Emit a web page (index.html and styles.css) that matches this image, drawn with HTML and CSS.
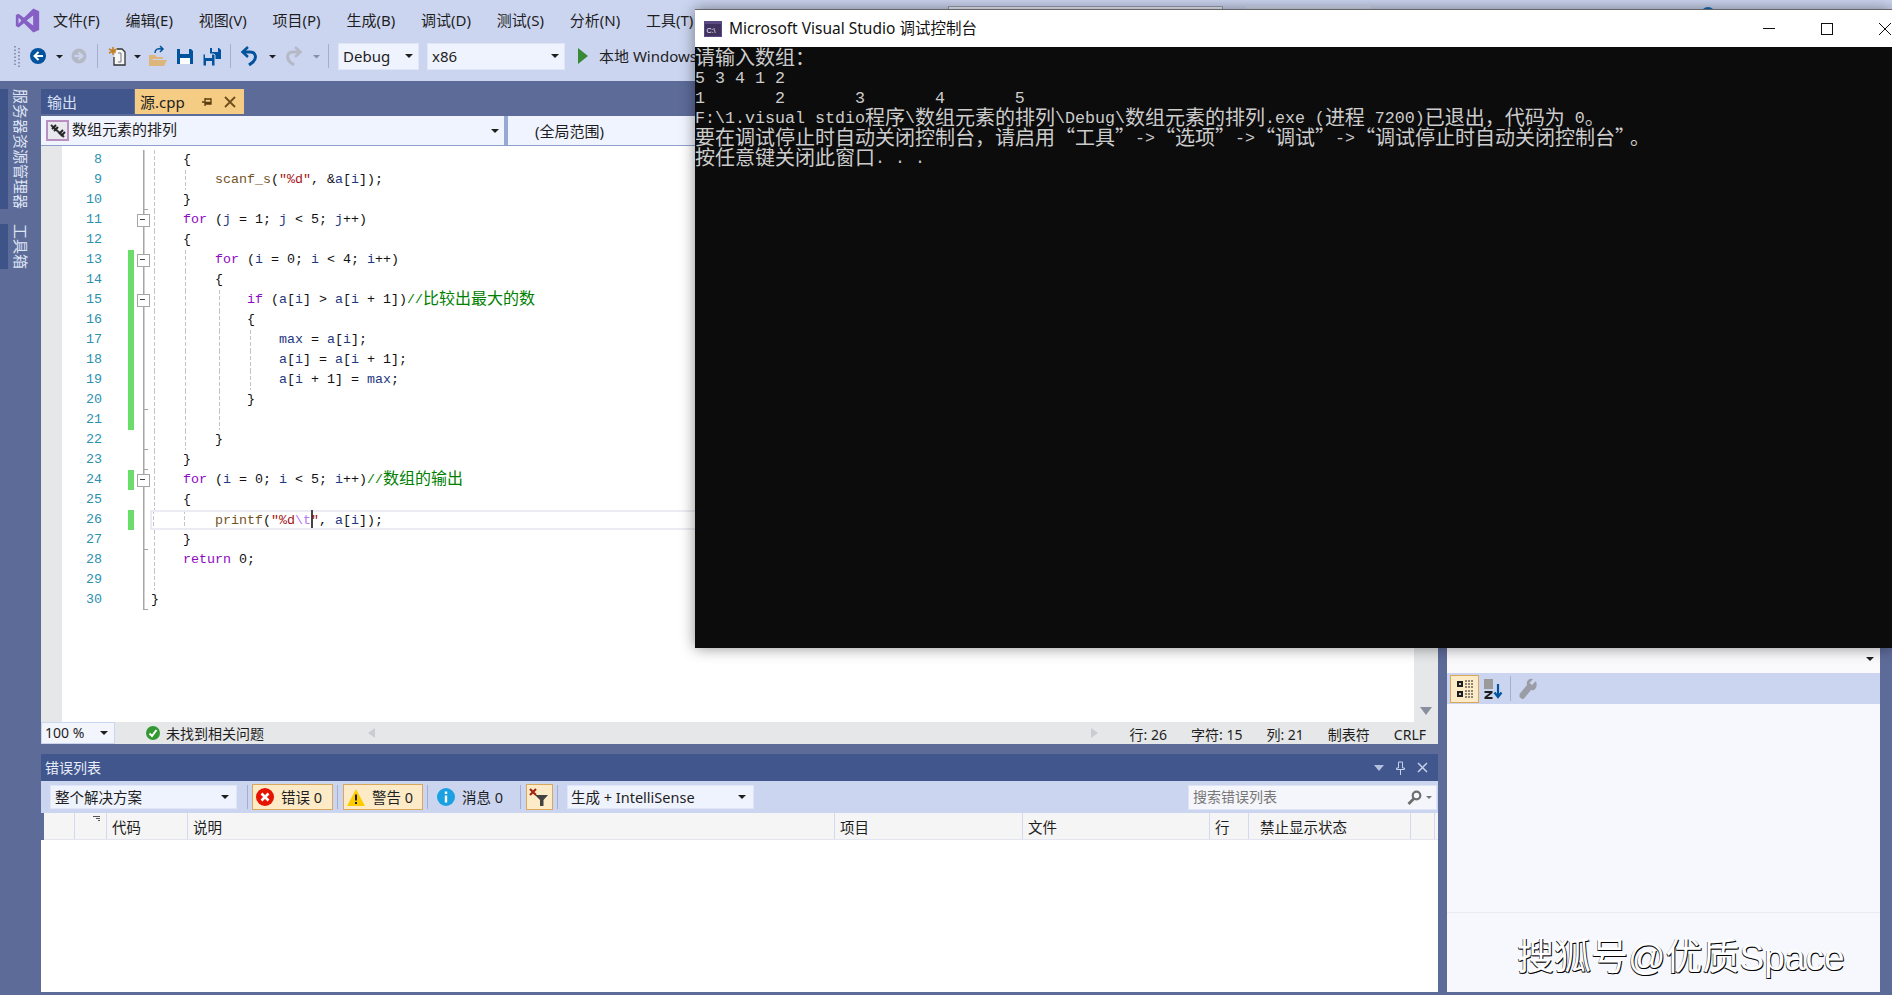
FILE: index.html
```html
<!DOCTYPE html>
<html lang="zh-CN">
<head>
<meta charset="utf-8">
<title>Visual Studio</title>
<link rel="stylesheet" href="styles.css">
</head>
<body>
<div class="app">
  <header class="menubar">
    <svg class="logo" viewBox="0 0 24 24"><path fill="#865fc5" fill-rule="evenodd" d="M17.6 0.5 8.6 9.4 3.4 5.4 0.8 6.7V17.3L3.4 18.6 8.6 14.6 17.6 23.5 23.2 21V3ZM17.4 7.2V16.8L11.2 12ZM3.4 9 6.1 12 3.4 15Z"/></svg>
    <nav class="menu">
      <span>文件(F)</span><span>编辑(E)</span><span>视图(V)</span><span>项目(P)</span><span>生成(B)</span><span>调试(D)</span><span>测试(S)</span><span>分析(N)</span><span>工具(T)</span>
    </nav>
    <div class="title-extras">
      <span class="tx-search"></span><span class="tx-box"></span><span class="tx-dot"></span>
    </div>
  </header>

  <div class="toolbar">
    <svg class="strip" width="338" height="41" viewBox="0 0 338 41">
      <path d="M15 6V27M19 8V27" stroke="#8a94b4" stroke-width="2" stroke-dasharray="1.5 2" fill="none"/>
      <circle cx="38" cy="16" r="8" fill="#00539c"/>
      <path d="M43 16H35M38.5 12 34.500 16 38.500 20" stroke="#fff" stroke-width="2" fill="none"/>
      <path d="M56 15h7l-3.500 3.500z" fill="#1e1e1e"/>
      <circle cx="79" cy="16" r="7.500" fill="#b5b9c6"/>
      <path d="M74.500 16H82M78.500 12.500 82.500 16 78.500 19.500" stroke="#ccd5f0" stroke-width="2" fill="none"/>
      <path d="M97.500 4V28M230.500 4V28M328.500 4V28" stroke="#a4afd0" fill="none"/>
      <path d="M113 7V15M109 9 117 13M109 13 117 9" stroke="#c27d1a" stroke-width="1.500" fill="none"/>
      <path d="M117 9H122L125 12V25H114V17" stroke="#333" stroke-width="1.300" fill="#f6f6f6"/>
      <path d="M118 13H121V22H118" stroke="#777" fill="none"/>
      <path d="M134 15h7l-3.500 3.500z" fill="#1e1e1e"/>
      <path d="M149 15H155L157 17H163V19H153L150 26H149ZM152 20H167L164 26H150Z" fill="#dcb67a"/>
      <path d="M155 13C155 9 158 8 162 9M160 6 163 9 160 12" stroke="#00539c" stroke-width="1.500" fill="none"/>
      <path fill="#00539c" d="M177 9H191L193 11V24H177Z"/>
      <path fill="#ccd5f0" d="M180 9H189V14H180Z"/>
      <path fill="#fff" d="M180 18H190V24H180Z"/>
      <path fill="#00539c" d="M210 8H219L221 10V19H210Z"/>
      <path fill="#ccd5f0" d="M212 8H218V12H212Z"/>
      <path fill="#00539c" stroke="#ccd5f0" d="M203 14H214L215 15V26H203Z"/>
      <path fill="#ccd5f0" d="M205 14H212V18H205ZM206 21H212V26H206Z"/>
      <path d="M243 12H250C256 12 257 18 253 22L249 25" stroke="#00539c" stroke-width="3" fill="none"/>
      <path d="M248 7 242.500 12 248 17" stroke="#00539c" stroke-width="2.500" fill="none"/>
      <path d="M269 15h7l-3.500 3.500z" fill="#1e1e1e"/>
      <path d="M300 12H293C287 12 286 18 290 22L294 25" stroke="#b5b9c6" stroke-width="3" fill="none"/>
      <path d="M295 7 300.500 12 295 17" stroke="#b5b9c6" stroke-width="2.500" fill="none"/>
      <path d="M313 15h7l-3.500 3.500z" fill="#888ea3"/>
    </svg>
    <div class="combo debug"><span>Debug</span><i class="caret-down"></i></div>
    <div class="combo x86"><span>x86</span><i class="caret-down"></i></div>
    <svg class="play" width="10" height="16" viewBox="0 0 10 16"><path d="M0 0 10 8 0 16Z" fill="#388a34"/></svg>
    <span class="run-text">本地 Windows 调试器</span>
  </div>

  <div class="workspace">
    <aside class="sidebar">
      <div class="side-tab server"><span>服务器资源管理器</span></div>
      <div class="side-tab tools"><span>工具箱</span></div>
    </aside>

    <main class="center">
      <div class="tabs">
        <div class="tab other">输出</div>
        <div class="tab active">
          <span class="tab-name">源.cpp</span>
          <svg class="tab-pin" width="12" height="12" viewBox="0 0 12 12"><path d="M1 6H4M4 2V10M4 3H10V8H4M4 6.500H10" stroke="#5a3c10" stroke-width="1.300" fill="none"/></svg>
          <svg class="tab-close" width="12" height="12" viewBox="0 0 12 12"><path d="M1 1 11 11M11 1 1 11" stroke="#6e4e1c" stroke-width="1.800"/></svg>
        </div>
      </div>
      <div class="navbar">
        <div class="nav-left">
          <svg class="class-icon" width="23" height="21" viewBox="0 0 23 21"><rect x="1" y="1" width="21" height="19" fill="#e8e8ee" stroke="#b98fc0" stroke-width="2"/><path d="M5 5 18 17" stroke="#333" stroke-width="2"/><path d="M6 9 10 5M8 11 12 7M13 14 17 10M15 16 19 12" stroke="#222" stroke-width="2"/></svg>
          <span>数组元素的排列</span>
          <i class="caret-down"></i>
        </div>
        <div class="nav-right">(全局范围)</div>
      </div>

      <div class="editor">
        <div class="editor-margin"></div>
        <div class="lines">
          <div class="row"><span class="num">8</span><span class="mark"></span><span class="fold"></span><code class="code lv0">    {</code></div>
          <div class="row"><span class="num">9</span><span class="mark"></span><span class="fold"></span><code class="code lv1">        <b class="f">scanf_s</b>(<b class="s">"%d"</b>, &amp;<b class="v">a</b>[<b class="v">i</b>]);</code></div>
          <div class="row"><span class="num">10</span><span class="mark"></span><span class="fold end"></span><code class="code lv0">    }</code></div>
          <div class="row"><span class="num">11</span><span class="mark"></span><span class="fold box"></span><code class="code lv0">    <b class="k">for</b> (<b class="v">j</b> = 1; <b class="v">j</b> &lt; 5; <b class="v">j</b>++)</code></div>
          <div class="row"><span class="num">12</span><span class="mark"></span><span class="fold"></span><code class="code lv0">    {</code></div>
          <div class="row"><span class="num">13</span><span class="mark on"></span><span class="fold box"></span><code class="code lv1">        <b class="k">for</b> (<b class="v">i</b> = 0; <b class="v">i</b> &lt; 4; <b class="v">i</b>++)</code></div>
          <div class="row"><span class="num">14</span><span class="mark on"></span><span class="fold"></span><code class="code lv1">        {</code></div>
          <div class="row"><span class="num">15</span><span class="mark on"></span><span class="fold box"></span><code class="code lv2">            <b class="k">if</b> (<b class="v">a</b>[<b class="v">i</b>] &gt; <b class="v">a</b>[<b class="v">i</b> + 1])<b class="c">//<i class="z">比较出最大的数</i></b></code></div>
          <div class="row"><span class="num">16</span><span class="mark on"></span><span class="fold"></span><code class="code lv2">            {</code></div>
          <div class="row"><span class="num">17</span><span class="mark on"></span><span class="fold"></span><code class="code lv3">                <b class="v">max</b> = <b class="v">a</b>[<b class="v">i</b>];</code></div>
          <div class="row"><span class="num">18</span><span class="mark on"></span><span class="fold"></span><code class="code lv3">                <b class="v">a</b>[<b class="v">i</b>] = <b class="v">a</b>[<b class="v">i</b> + 1];</code></div>
          <div class="row"><span class="num">19</span><span class="mark on"></span><span class="fold"></span><code class="code lv3">                <b class="v">a</b>[<b class="v">i</b> + 1] = <b class="v">max</b>;</code></div>
          <div class="row"><span class="num">20</span><span class="mark on"></span><span class="fold end"></span><code class="code lv2">            }</code></div>
          <div class="row"><span class="num">21</span><span class="mark on"></span><span class="fold"></span><code class="code lv2"> </code></div>
          <div class="row"><span class="num">22</span><span class="mark"></span><span class="fold end"></span><code class="code lv1">        }</code></div>
          <div class="row"><span class="num">23</span><span class="mark"></span><span class="fold end"></span><code class="code lv0">    }</code></div>
          <div class="row"><span class="num">24</span><span class="mark on"></span><span class="fold box"></span><code class="code lv0">    <b class="k">for</b> (<b class="v">i</b> = 0; <b class="v">i</b> &lt; 5; <b class="v">i</b>++)<b class="c">//<i class="z">数组的输出</i></b></code></div>
          <div class="row"><span class="num">25</span><span class="mark"></span><span class="fold"></span><code class="code lv0">    {</code></div>
          <div class="row"><span class="num">26</span><span class="mark on"></span><span class="fold"></span><code class="code lv1 current">        <b class="f">printf</b>(<b class="s">"%d</b><b class="e">\t</b><span class="caret"></span><b class="s">"</b>, <b class="v">a</b>[<b class="v">i</b>]);</code></div>
          <div class="row"><span class="num">27</span><span class="mark"></span><span class="fold end"></span><code class="code lv0">    }</code></div>
          <div class="row"><span class="num">28</span><span class="mark"></span><span class="fold"></span><code class="code lv0">    <b class="k">return</b> 0;</code></div>
          <div class="row"><span class="num">29</span><span class="mark"></span><span class="fold"></span><code class="code lv0"> </code></div>
          <div class="row"><span class="num">30</span><span class="mark"></span><span class="fold end"></span><code class="code">}</code></div>
        </div>
        <div class="vscroll"><i class="arrow-down"></i></div>
      </div>

      <div class="statusbar">
        <div class="combo zoom"><span>100 %</span><i class="caret-down"></i></div>
        <svg class="check" width="14" height="14" viewBox="0 0 14 14"><circle cx="7" cy="7" r="7" fill="#339933"/><path d="M3.500 7.500 6 10 10.500 4" stroke="#fff" stroke-width="2" fill="none"/></svg>
        <span class="no-issue">未找到相关问题</span>
        <i class="arrow-left"></i>
        <i class="arrow-right"></i>
        <div class="st-right"><span>行: 26</span><span>字符: 15</span><span>列: 21</span><span>制表符</span><span>CRLF</span></div>
      </div>

      <section class="errors">
        <div class="err-title">
          <span>错误列表</span>
          <div class="err-actions">
            <svg width="10" height="6" viewBox="0 0 10 6"><path d="M0 0H10L5 6Z" fill="#b4bfdc"/></svg>
            <svg width="9" height="14" viewBox="0 0 9 14"><path d="M2.500 1H6.500V7H8.500V8.500H0.500V7H2.500ZM4.500 8.500V14" stroke="#c6d0e8" fill="none"/></svg>
            <svg width="11" height="11" viewBox="0 0 11 11"><path d="M1 1 10 10M10 1 1 10" stroke="#c6d0e8" stroke-width="1.500"/></svg>
          </div>
        </div>
        <div class="err-toolbar">
          <div class="combo scope"><span>整个解决方案</span><i class="caret-down"></i></div>
          <i class="sep"></i>
          <div class="toggle tg-err">
            <svg width="18" height="18" viewBox="0 0 18 18"><circle cx="9" cy="9" r="9" fill="#e51400"/><path d="M5.500 5.500 12.500 12.500M12.500 5.500 5.500 12.500" stroke="#fff" stroke-width="2.600"/></svg>
            <span>错误 0</span>
          </div>
          <i class="sep"></i>
          <div class="toggle tg-warn">
            <svg width="18" height="17" viewBox="0 0 18 17"><path d="M9 0 18 17H0Z" fill="#ffcc00"/><path d="M9 5.500V11.500M9 13V15" stroke="#1e1e1e" stroke-width="2"/></svg>
            <span>警告 0</span>
          </div>
          <i class="sep"></i>
          <div class="plain-msg">
            <svg width="18" height="18" viewBox="0 0 18 18"><circle cx="9" cy="9" r="9" fill="#1ba1e2"/><path d="M9 3.500V6M9 7.500V14.500" stroke="#fff" stroke-width="2.400"/></svg>
            <span>消息 0</span>
          </div>
          <i class="sep"></i>
          <div class="toggle tg-filter">
            <svg width="20" height="18" viewBox="0 0 20 18"><path d="M1 1 7 7M7 1 1 7" stroke="#a1260d" stroke-width="2.200"/><path d="M6 7H19L14.500 12V18H11V12Z" fill="#424242"/></svg>
          </div>
          <i class="sep"></i>
          <div class="combo kind"><span>生成 + IntelliSense</span><i class="caret-down"></i></div>
          <div class="err-search">
            <span>搜索错误列表</span>
            <svg width="15" height="15" viewBox="0 0 15 15"><circle cx="9.500" cy="5.500" r="3.800" stroke="#6d6d6d" stroke-width="2.200" fill="none"/><path d="M7 8.500 1.500 14" stroke="#6d6d6d" stroke-width="2.800"/></svg>
            <i class="caret-down grey"></i>
          </div>
        </div>
        <div class="err-head">
          <span></span><span class="sort-cell"><svg width="7" height="5" viewBox="0 0 7 5"><path d="M0 0H7V1H0ZM3 2H7V3H3ZM5 4H7V5H5Z" fill="#555"/></svg></span><span>代码</span><span>说明</span><span>项目</span><span>文件</span><span>行</span><span class="suppress">禁止显示状态</span><span></span>
        </div>
        <div class="err-body"></div>
      </section>
    </main>

    <aside class="props">
      <div class="props-head"><i class="caret-down"></i></div>
      <div class="props-bar">
        <div class="prop-btn on">
          <svg width="18" height="20" viewBox="0 0 18 20"><path d="M1 2H7V8H1ZM1 12H7V18H1Z" fill="#1e1e1e"/><path d="M3 5H5M4 4V6M3 15H5M4 14V16" stroke="#fff"/><path d="M9 2H17M9 5H17M9 8H17M9 12H17M9 15H17M9 18H17" stroke="#1e1e1e" stroke-dasharray="2 1"/></svg>
        </div>
        <svg class="az" width="20" height="22" viewBox="0 0 20 22"><rect x="1" y="1" width="9" height="10" fill="#9a9a9a"/><path d="M1.500 13H9.500V15L4.500 19H9.500V21H1.500V19L6.500 15H1.500Z" fill="#1e1e1e"/><path d="M15 6V18M11.500 14.500 15 19 18.500 14.500" stroke="#00539c" stroke-width="2.200" fill="none"/></svg>
        <i class="prop-sep"></i>
        <svg class="wrench" width="20" height="22" viewBox="0 0 20 22"><path d="M18 3 14 7 11.500 5 15 1C11 0 8 3 9 7L1.500 16V19L4 21H5.500L13 12C17 13 20 9 18 3Z" fill="#9a9da6"/></svg>
      </div>
      <div class="props-grid"></div>
      <div class="props-desc"><span class="watermark">搜狐号@优质Space</span></div>
    </aside>
  </div>
</div>

<section class="console">
  <div class="con-title">
    <svg width="18" height="16" viewBox="0 0 18 16"><rect width="18" height="16" fill="#5b4a82"/><rect x="1" y="3" width="16" height="12" fill="#3f3160"/><text x="2.500" y="12" class="con-ico-text">C:\</text></svg>
    <span>Microsoft Visual Studio 调试控制台</span>
    <div class="con-ctrl">
      <svg width="12" height="12" viewBox="0 0 12 12"><path d="M0 5.500H12" stroke="#111"/></svg>
      <svg width="12" height="12" viewBox="0 0 12 12"><rect x="0.500" y="0.500" width="11" height="11" fill="none" stroke="#111"/></svg>
      <svg width="12" height="12" viewBox="0 0 12 12"><path d="M0 0 12 12M12 0 0 12" stroke="#111"/></svg>
    </div>
  </div>
  <pre class="con-body"><i class="z">请输入数组：</i>
5 3 4 1 2
1       2       3       4       5
F:\1.visual stdio<i class="z">程序</i>\<i class="z">数组元素的排列</i>\Debug\<i class="z">数组元素的排列</i>.exe (<i class="z">进程</i> 7200)<i class="z">已退出，代码为</i> 0<i class="z">。</i>
<i class="z">要在调试停止时自动关闭控制台，请启用“工具”</i>-&gt;<i class="z">“选项”</i>-&gt;<i class="z">“调试”</i>-&gt;<i class="z">“调试停止时自动关闭控制台”</i><i class="z stop">。</i>
<i class="z">按任意键关闭此窗口</i>. . .</pre>
</section>
</body>
</html>
```
FILE: styles.css
```css
* { box-sizing: border-box; }
html, body { margin: 0; padding: 0; width: 1892px; height: 995px; overflow: hidden; }
body {
  position: relative;
  background: #5d6b99;
  color: #1e1e1e;
  font: 15px/20px "Noto Sans", "Noto Sans CJK SC", sans-serif;
}
i, b { font-style: normal; font-weight: normal; }
.app { display: flex; flex-direction: column; height: 995px; }

/* Top bars */
.menubar { height: 40px; flex: none; display: flex; align-items: center; background: #ccd5f0; padding-left: 15px; }
.logo { width: 25px; height: 25px; flex: none; }
.menu { display: flex; gap: 25.800px; margin-left: 13px; white-space: nowrap; }
.title-extras { margin-left: auto; align-self: flex-start; display: flex; padding: 6px 177px 0 0; }
.tx-search { width: 275px; height: 30px; background: #eef1fb; border: 1px solid #98a0b4; }
.tx-box { width: 125px; height: 30px; margin-left: 23px; background: #d5dcf2; }
.tx-dot { width: 14px; height: 14px; margin: 1px 0 0 330px; border-radius: 50%; background: #0e70c0; }

.toolbar { height: 41px; flex: none; display: flex; align-items: flex-start; background: #ccd5f0; white-space: nowrap; }
.strip { display: block; flex: none; }
.combo { display: flex; align-items: center; justify-content: space-between; background: #eff3fd; border: 1px solid #e0e6f8; }
.caret-down { display: block; width: 0; height: 0; flex: none; border: 4px solid transparent; border-top: 4px solid #1e1e1e; border-bottom: 0; }
.caret-down.grey { border-top-color: #777; }
.debug { width: 81px; height: 27px; margin-top: 3px; padding: 0 5px 1px 4px; }
.x86 { width: 138px; height: 27px; margin: 3px 0 0 8px; padding: 0 5px 1px 4px; }
.play { margin: 8px 0 0 13px; flex: none; }
.run-text { margin: 6px 0 0 11px; }

.workspace { flex: 1; display: flex; min-height: 0; }

/* Left rail */
.sidebar { width: 41px; flex: none; padding-top: 8px; display: flex; flex-direction: column; gap: 15px; }
.side-tab { background: linear-gradient(90deg, #3e5489 8px, transparent 8px); }
.side-tab span { display: block; padding-left: 13px; writing-mode: vertical-rl; text-orientation: sideways; color: #dce3f4; line-height: 16px; }
.side-tab.server { height: 120px; }
.side-tab.tools { height: 45px; }

/* Center column */
.center { width: 1397px; flex: none; padding-top: 8px; display: flex; flex-direction: column; }
.tabs { height: 27px; flex: none; display: flex; gap: 1px; }
.tab { height: 25px; display: flex; align-items: center; }
.tab.other { width: 93px; padding-left: 6px; background: #40568d; color: #d8e0f4; }
.tab.active { width: 109px; padding-left: 5px; background: #f5cc84; }
.tab-name { width: 61px; }
.tab-close { margin-left: 11px; }

.navbar { height: 30px; flex: none; display: flex; background: #f0f4fe; border-bottom: 1.500px solid #8fa0cc; }
.nav-left { width: 463px; flex: none; display: flex; align-items: center; padding: 0 5px; }
.nav-left span { margin: 0 0 3px 3px; font-size: 15px; }
.nav-left .caret-down { margin-left: auto; }
.class-icon { flex: none; }
.nav-right { flex: 1; padding: 5px 0 0 27px; border-left: 4px solid #98a8d4; }

.editor { height: 576px; flex: none; display: flex; background: #fff; overflow: hidden; }
.editor-margin { width: 21px; flex: none; background: #e6e7e8; }
.lines { flex: 1; padding-top: 4px; display: flex; flex-direction: column; }
.row { height: 20px; flex: none; display: flex; font: 13.333px/20px "Liberation Mono", monospace; }
.num { width: 40px; flex: none; text-align: right; color: #2b91af; }
.mark { width: 6px; flex: none; margin-left: 26px; }
.mark.on { background: #6bdd6b; }
.fold { width: 17px; flex: none; position: relative; background: linear-gradient(#a5a5a5, #a5a5a5) 8.500px 0 / 1.500px 100% no-repeat; }
.fold.end::after { content: ""; position: absolute; left: 9px; bottom: 0; width: 5px; height: 1px; background: #a5a5a5; }
.fold.box::before { content: ""; position: absolute; left: 3px; top: 4px; width: 11px; height: 11px; background: #fff; border: 1px solid #a5a5a5; }
.fold.box::after { content: ""; position: absolute; left: 6px; top: 9px; width: 5px; height: 1px; background: #444; }
.code {
  flex: 1; display: block; white-space: pre; font: inherit; color: #111;
  --dash: linear-gradient(#c4c4c4 60%, transparent 60%);
  background-repeat: repeat-y; background-size: 1px 6px;
}
.lv0 { background-image: var(--dash); background-position: 3px 0; }
.lv1 { background-image: var(--dash), var(--dash); background-position: 3px 0, 34px 0; }
.lv2 { background-image: var(--dash), var(--dash), var(--dash); background-position: 3px 0, 34px 0, 68px 0; }
.lv3 { background-image: var(--dash), var(--dash), var(--dash), var(--dash); background-position: 3px 0, 34px 0, 68px 0, 99px 0; }
.current { box-shadow: inset 0 0 0 2px #ebebf3; margin-left: -1px; padding-left: 1px; }
.k { color: #8f08c4; }
.v { color: #1f377f; }
.f { color: #74531f; }
.s { color: #a31515; }
.e { color: #b776fb; }
.c { color: #008000; }
.z { font: 16px/0 "Noto Sans CJK SC", sans-serif; vertical-align: -1px; }
.caret { display: inline-block; width: 2px; height: 18px; margin-right: -2px; vertical-align: -4px; background: #444; }
.vscroll { width: 24px; flex: none; background: #e6e7e8; display: flex; justify-content: center; align-items: flex-end; padding-bottom: 7px; }
.arrow-down { width: 0; height: 0; border: 6px solid transparent; border-top: 8px solid #8a8f9e; border-bottom: 0; }

.statusbar { height: 22px; flex: none; display: flex; align-items: center; background: #e6e7e8; font-size: 14px; white-space: nowrap; }
.zoom { width: 74px; height: 22px; padding: 0 6px 0 3px; background: #f3f5fc; border: 1px solid #ccd5f0; }
.check { margin-left: 31px; flex: none; }
.no-issue { margin: 2px 0 0 6px; }
.arrow-left { margin-left: 104px; width: 0; height: 0; border: 5.500px solid transparent; border-right: 7px solid #c9ccd4; border-left: 0; }
.arrow-right { margin-left: auto; width: 0; height: 0; border: 5.500px solid transparent; border-left: 7px solid #c9ccd4; border-right: 0; }
.st-right { display: flex; gap: 24px; margin: 3px 0 0 32px; padding-right: 12px; }

/* Error list */
.errors { flex: 1; margin-top: 10px; margin-bottom: 3px; display: flex; flex-direction: column; min-height: 0; }
.err-title { height: 27px; flex: none; display: flex; align-items: center; justify-content: space-between; padding: 0 10px 0 4px; background: #40568d; color: #e8edf9; font-size: 14px; }
.err-actions { display: flex; align-items: center; gap: 12px; }
.err-toolbar { height: 32px; flex: none; display: flex; align-items: center; padding: 0 1px 0 9px; background: #ccd5f0; white-space: nowrap; font-size: 14.500px; }
.scope { width: 187px; height: 24px; padding: 0 7px 0 4px; }
.sep { width: 1px; height: 24px; flex: none; margin: 0 5px 0 4px; background: #a4afd0; }
.scope + .sep { margin: 0 4px 0 10px; }
.toggle { height: 26px; display: flex; align-items: center; gap: 7px; background: #fdebc8; border: 1px solid #dba75c; padding-left: 3px; }
.tg-err { width: 81px; }
.tg-warn { width: 80px; }
.tg-filter { width: 27px; padding-left: 2px; }
.plain-msg { width: 79px; display: flex; align-items: center; gap: 7px; margin-left: 4px; }
.kind { width: 187px; height: 24px; padding: 0 7px 0 3px; margin-left: 4px; }
.err-search { width: 249px; height: 25px; margin-left: auto; display: flex; align-items: center; padding: 0 4px; background: #f5f6fb; border: 1px solid #dfe4f4; color: #777; font-size: 14px; }
.err-search span { margin-right: auto; }
.err-search .caret-down { margin-left: 4px; border-width: 3.500px; }
.err-head {
  height: 27px; flex: none; margin-left: 3px; display: grid;
  grid-template-columns: 31px 32px 81px 647px 188px 187px 39px 162px 24px;
  align-items: stretch; background: #f5f5f5; border-bottom: 1px solid #e3e5f0;
  line-height: 29px; font-size: 14.500px;
}
.err-head span { padding-left: 5px; border-right: 1.500px solid #d3d9ef; white-space: nowrap; overflow: hidden; }
.err-head .sort-cell { display: flex; justify-content: flex-end; padding: 3px 6px 0 0; }
.err-head .suppress { padding-left: 11px; }
.sort-cell svg { display: block; }
.err-body { flex: 1; background: #fff; }

/* Properties */
.props { width: 433px; flex: none; margin: 8px 0 3px 9px; display: flex; flex-direction: column; background: #f6f8fe; }
.props-head { height: 584px; flex: none; display: flex; justify-content: flex-end; align-items: flex-end; padding: 0 6px 12px 0; background: #fafafd; }
.props-bar { height: 31px; flex: none; display: flex; align-items: center; padding-left: 3px; background: #ccd5f0; }
.prop-btn { width: 29px; height: 28px; display: flex; align-items: center; justify-content: center; }
.prop-btn.on { background: #fdebc8; border: 1px solid #dba75c; }
.az { margin-left: 4px; }
.prop-sep { width: 1px; height: 25px; margin: 0 7px 0 7px; background: #a4afd0; }
.props-grid { height: 209px; flex: none; border-bottom: 1px solid #e9ebf3; }
.props-desc { flex: 1; padding: 24px 0 0 70px; }
.watermark { font: 37px/42px "Liberation Sans", "Noto Sans CJK SC", sans-serif; color: #fff; text-shadow: 1px 1px 0 #000, -0.500px 0.500px 0 #222; white-space: nowrap; }

/* Console window */
.console { position: absolute; left: 695px; top: 9px; width: 1197px; height: 639px; display: flex; flex-direction: column; background: #0c0c0c; border-top: 1px solid #666; box-shadow: 0 0 14px rgba(0, 0, 0, 0.45); }
.con-title { height: 37px; flex: none; display: flex; align-items: center; padding: 0 1px 0 9px; background: #fff; color: #111; white-space: nowrap; }
.con-title > span { margin: 0 0 1px 7px; font-size: 15.500px; }
.con-ico-text { font: 7px "Liberation Sans", sans-serif; fill: #fff; }
.con-ctrl { margin-left: auto; display: flex; gap: 46px; }
.con-body { margin: 0; padding-top: 2px; font: 16.667px/20px "Liberation Mono", monospace; color: #cccccc; white-space: pre; }
.con-body .z { font: 20px/0 "Noto Sans CJK SC", sans-serif; vertical-align: -2px; }
.con-body .stop { margin-left: 5px; }
```
